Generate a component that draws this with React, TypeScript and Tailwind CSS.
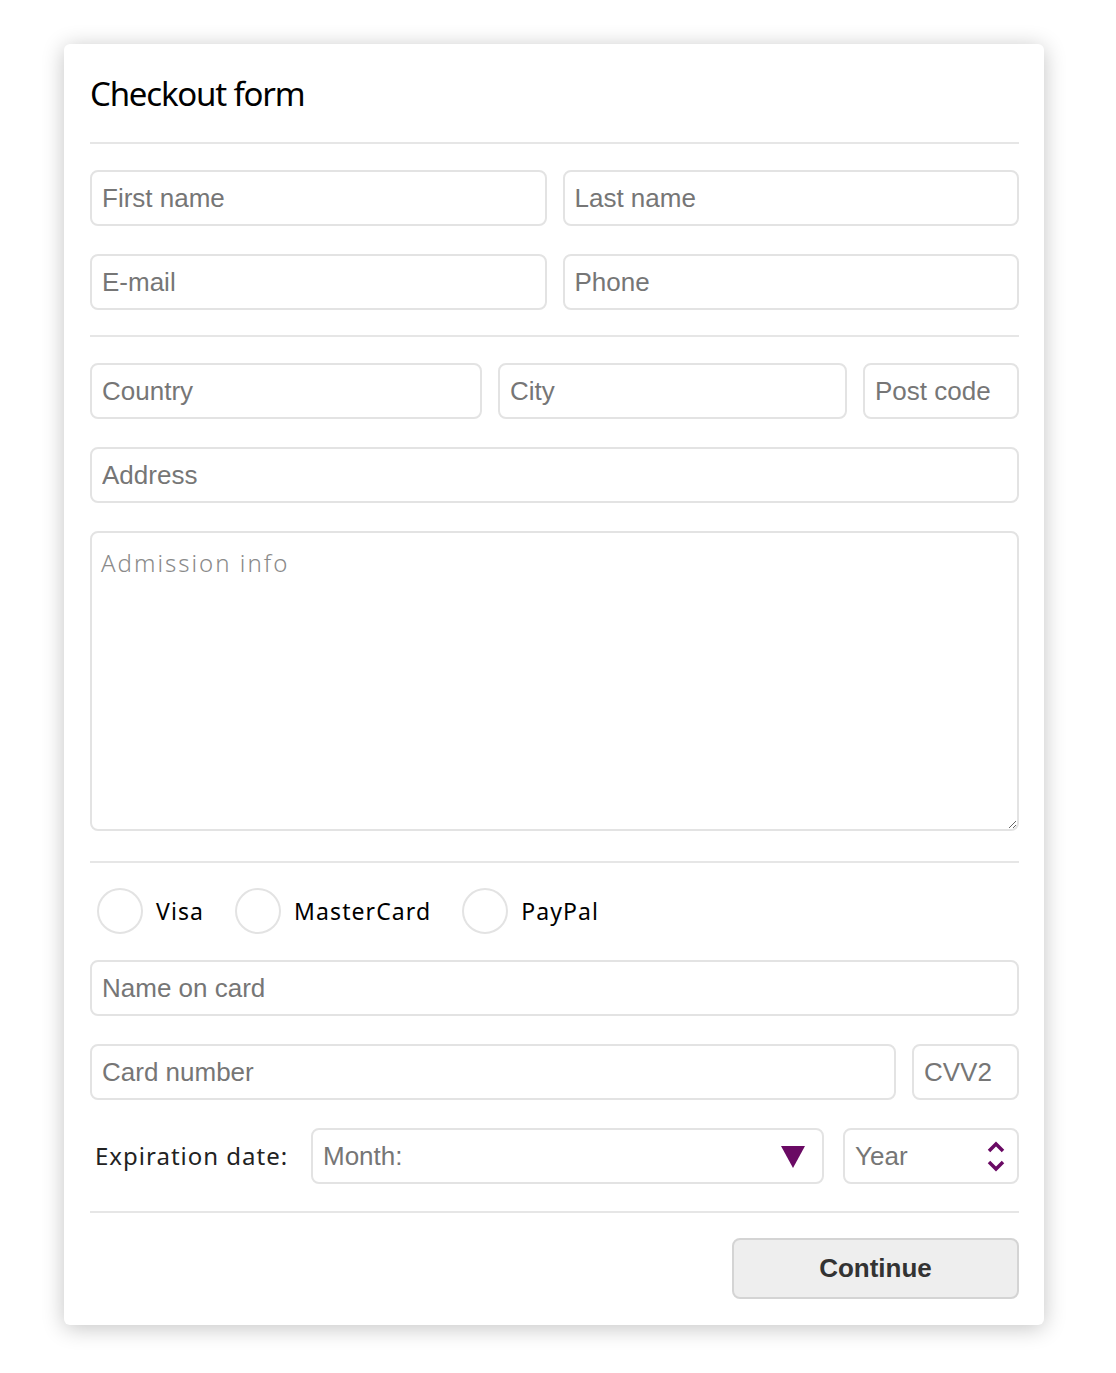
import React from "react";

const inputCls =
	"h-[56px] rounded-lg border-2 border-[#e3e3e3] bg-white px-[10px] text-[26px] text-[#222] outline-none placeholder:text-[#767676]";

function Field({ placeholder, className = "w-full" }: { placeholder: string; className?: string }) {
	return (
		<input
			type="text"
			placeholder={placeholder}
			className={`${inputCls} ${className}`}
			style={{ fontFamily: '"Liberation Sans", Arial, sans-serif' }}
		/>
	);
}

function Divider() {
	return <div className="h-[2px] w-full bg-[#e6e6e6]" />;
}

function Radio({ label }: { label: string }) {
	return (
		<label className="flex items-center gap-[13px]">
			<span className="h-[46px] w-[46px] rounded-full border-2 border-[#e3e3e3] bg-white" />
			<span className="text-[23px] tracking-[1.1px] text-black">{label}</span>
		</label>
	);
}

export default function App() {
	return (
		<div className="min-h-screen bg-white pt-[44px]" style={{ fontFamily: '"Noto Sans", sans-serif' }}>
			<div className="ml-[64px] w-[980px] rounded-md bg-white pl-[26px] pr-[25px] pb-[26px] shadow-[0_3px_22px_rgba(0,0,0,0.24)]">
				<h1 className="pt-[27px] pb-[25px] text-[33px] leading-[46px] tracking-[-1.2px] text-black">
					Checkout form
				</h1>
				<Divider />

				<div className="grid grid-cols-2 gap-x-[16px] gap-y-[28px] pt-[26px] pb-[25px]">
					<Field placeholder="First name" />
					<Field placeholder="Last name" />
					<Field placeholder="E-mail" />
					<Field placeholder="Phone" />
				</div>
				<Divider />

				<div className="flex flex-col gap-[28px] pt-[26px] pb-[30px]">
					<div className="flex gap-[16px]">
						<Field placeholder="Country" className="w-[392px] flex-none" />
						<Field placeholder="City" className="w-[349px] flex-none" />
						<Field placeholder="Post code" className="min-w-0 flex-1" />
					</div>
					<Field placeholder="Address" />
					<textarea
						placeholder="Admission info"
						className="h-[300px] w-full resize-y rounded-lg border-2 border-[#e3e3e3] px-[9px] py-[12px] text-[24px] font-light tracking-[2px] text-[#222] outline-none placeholder:text-[#8a8a8a]"
					/>
				</div>
				<Divider />

				<div className="flex items-center gap-[31px] px-[7px] pt-[25px] pb-[26px]">
					<Radio label="Visa" />
					<Radio label="MasterCard" />
					<Radio label="PayPal" />
				</div>

				<div className="flex flex-col gap-[28px] pb-[27px]">
					<Field placeholder="Name on card" />
					<div className="flex gap-[16px]">
						<Field placeholder="Card number" className="min-w-0 flex-1" />
						<Field placeholder="CVV2" className="w-[107px] flex-none" />
					</div>
					<div className="flex items-center">
						<span className="w-[221px] flex-none pl-[5px] text-[24px] tracking-[1px] text-[#222]">
							Expiration date:
						</span>
						<div className="relative w-[513px] flex-none">
							<Field placeholder="Month:" />
							<svg
								className="pointer-events-none absolute right-[18px] top-[17px]"
								width="26"
								height="24"
								viewBox="0 0 26 24"
							>
								<path d="M1 1 H25 L13 23 Z" fill="#6a0a64" />
							</svg>
						</div>
						<div className="relative ml-[19px] min-w-0 flex-1">
							<Field placeholder="Year" />
							<svg
								className="pointer-events-none absolute right-[13px] top-[13px]"
								width="20"
								height="31"
								viewBox="0 0 20 31"
							>
								<path d="M3 10 L10 3 L17 10" stroke="#6a0a64" strokeWidth="3.5" fill="none" />
								<path d="M3 21 L10 28 L17 21" stroke="#6a0a64" strokeWidth="3.5" fill="none" />
							</svg>
						</div>
					</div>
				</div>
				<Divider />

				<div className="flex justify-end pt-[25px]">
					<button
						className="h-[61px] w-[287px] rounded-lg border-2 border-[#d4d4d4] bg-[#eeeeee] text-[26px] font-bold text-[#333]"
						style={{ fontFamily: '"Liberation Sans", Arial, sans-serif' }}
					>
						Continue
					</button>
				</div>
			</div>
		</div>
	);
}
